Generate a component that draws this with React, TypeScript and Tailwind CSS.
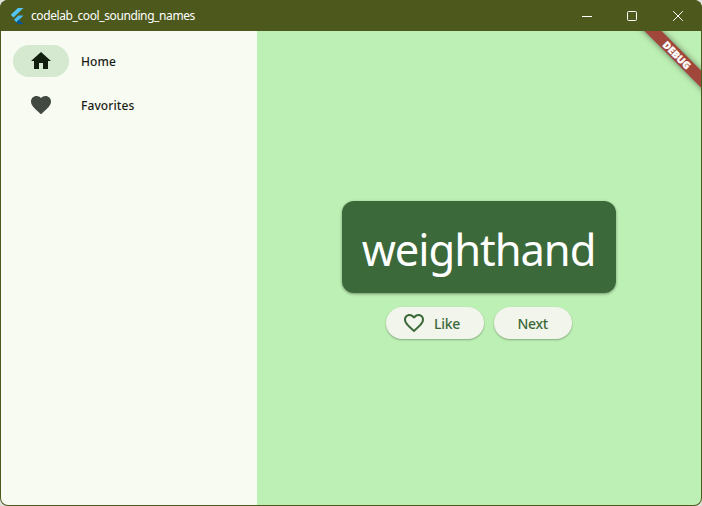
import type { ReactNode } from "react";

const HEART =
  "M12 21.35l-1.45-1.32C5.4 15.36 2 12.28 2 8.5 2 5.42 4.42 3 7.5 3c1.74 0 3.41.81 4.5 2.09C13.09 3.81 14.76 3 16.5 3 19.58 3 22 5.42 22 8.5c0 3.78-3.4 6.86-8.55 11.54L12 21.35z";
const HEART_OUTLINE =
  "M16.5 3c-1.74 0-3.41.81-4.5 2.09C10.91 3.81 9.24 3 7.5 3 4.42 3 2 5.42 2 8.5c0 3.78 3.4 6.86 8.55 11.54L12 21.35l1.45-1.32C18.6 15.36 22 12.28 22 8.5 22 5.42 19.58 3 16.5 3zm-4.4 15.55l-.1.1-.1-.1C7.14 14.24 4 11.39 4 8.5 4 6.5 5.5 5 7.5 5c1.54 0 3.04.99 3.57 2.36h1.87C13.46 5.99 14.96 5 16.5 5c2 0 3.5 1.5 3.5 3.5 0 2.89-3.14 5.74-7.9 10.05z";
const HOME = "M10 20v-6h4v6h5v-8h3L12 3 2 12h3v8z";

function Icon({ d, className }: { d: string; className: string }) {
  return (
    <svg viewBox="0 0 24 24" className={className} fill="currentColor">
      <path d={d} />
    </svg>
  );
}

function FlutterLogo() {
  return (
    <svg viewBox="0 0 14 16" className="ml-[10px] h-4 w-[14px]">
      <path d="M8 0H13.500L3.500 9.400 0.800 6.800z" fill="#54c5f8" />
      <path d="M8.300 7.400H13.500L9 11.800 6.500 14.200 3.900 11.700z" fill="#45bdf5" />
      <path d="M6.500 14.200L9 11.800 13.500 16H8.400z" fill="#01579b" />
    </svg>
  );
}

function TitleBar() {
  return (
    <header className="flex h-[31px] shrink-0 items-center bg-[#4d591c] text-white">
      <FlutterLogo />
      <h1 className="ml-[7px] text-[12px] leading-4 tracking-[-0.4px]">codelab_cool_sounding_names</h1>
      <div className="ml-auto flex">
        <svg viewBox="0 0 46 30" className="h-[30px] w-[46px]" fill="none" stroke="currentColor">
          <path d="M18 15.5h10" />
        </svg>
        <svg viewBox="0 0 46 30" className="h-[30px] w-[46px]" fill="none" stroke="currentColor">
          <rect x="17.5" y="10.5" width="9" height="9" rx="1" />
        </svg>
        <svg viewBox="0 0 46 30" className="h-[30px] w-[46px]" fill="none" stroke="currentColor">
          <path d="M17.200 10.200l9.600 9.600M26.800 10.200L17.200 19.800" />
        </svg>
      </div>
    </header>
  );
}

function NavItem({ icon, label, selected }: { icon: string; label: string; selected?: boolean }) {
  return (
    <button className="flex h-8 items-center gap-3 text-left">
      <span
        className={
          selected
            ? "flex h-8 w-14 items-center justify-center rounded-full bg-[#d5e8d0] text-[#111f0f]"
            : "flex h-8 w-14 items-center justify-center text-[#424940]"
        }
      >
        <Icon d={icon} className="h-6 w-6" />
      </span>
      <span className="pt-0.5 text-[12px] font-medium tracking-[0.1px] text-[#191d17]">{label}</span>
    </button>
  );
}

function PillButton({ children, className }: { children: ReactNode; className: string }) {
  return (
    <button
      className={`flex h-8 items-center rounded-full bg-[#f2f5ec] text-[14px] font-medium tracking-[-0.3px] text-[#3c6939] shadow-[0_1px_2px_rgba(0,0,0,0.3)] ${className}`}
    >
      {children}
    </button>
  );
}

export default function App() {
  return (
    <div className="h-[506px] w-[702px] bg-[#dfe0dc] font-['Noto_Sans','Open_Sans',sans-serif]">
      <div className="relative flex h-full flex-col overflow-hidden rounded-lg bg-[#4d591c]">
        <TitleBar />
        <div className="mx-px mb-px flex flex-1 overflow-hidden rounded-b-[7px]">
          <nav className="flex w-64 flex-col gap-3 bg-[#f8fbf1] pt-[14px] pl-3">
            <NavItem icon={HOME} label="Home" selected />
            <NavItem icon={HEART} label="Favorites" />
          </nav>
          <main className="relative flex flex-1 flex-col items-center overflow-hidden bg-[#bdf0b4] pt-[170px]">
            <div className="flex h-[92px] w-[274px] items-center justify-center rounded-xl bg-[#3c6939] pt-[3px] shadow-[0_1px_3px_rgba(0,0,0,0.4)]">
              <span className="mr-px text-[43.5px] leading-[52px] tracking-[-1.05px] whitespace-nowrap text-white">
                weighthand
              </span>
            </div>
            <div className="mt-[14px] flex gap-[10px]">
              <PillButton className="w-[97.5px] gap-2 pl-4">
                <Icon d={HEART_OUTLINE} className="h-6 w-6" />
                <span className="pt-px">Like</span>
              </PillButton>
              <PillButton className="w-[78.5px] justify-center">
                <span className="pt-px">Next</span>
              </PillButton>
            </div>
            <div className="absolute top-[18px] right-[-26px] flex h-3 w-[100px] rotate-45 items-center justify-center bg-[#a0463b] text-[10px] leading-3 font-black text-white shadow-[0_0_6px_rgba(0,0,0,0.5)] [-webkit-text-stroke:0.3px_white]">
              DEBUG
            </div>
          </main>
        </div>
      </div>
    </div>
  );
}
